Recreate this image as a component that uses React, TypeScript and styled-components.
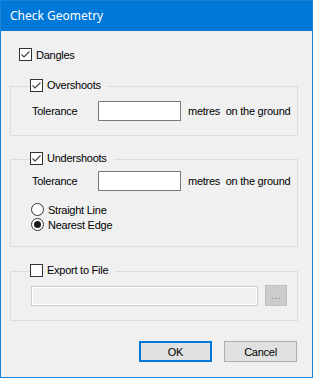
import styled, { createGlobalStyle } from "styled-components";

const GlobalStyle = createGlobalStyle`
  html, body {
    margin: 0;
    padding: 0;
    background: #f0f0f0;
  }
  * { box-sizing: border-box; }
`;

const Window = styled.div`
  width: 313px;
  height: 378px;
  border: 1px solid #1883d7;
  background: #f0f0f0;
  display: flex;
  flex-direction: column;
  font-family: "Liberation Sans", Arial, sans-serif;
  font-size: 11px;
  letter-spacing: -0.25px;
  color: #000;
`;

const TitleBar = styled.div`
  height: 30px;
  flex: none;
  background: #0078d7;
  color: #fff;
  display: flex;
  align-items: center;
  padding-left: 9px;
  padding-bottom: 1px;
  font-family: "Noto Sans", "Open Sans", sans-serif;
  font-size: 12px;
  letter-spacing: 0;
`;

const Body = styled.div`
  flex: 1;
  display: flex;
  flex-direction: column;
  padding: 0 14px 0 9px;
`;

const CheckRow = styled.label<{ $top?: number }>`
  display: flex;
  align-items: center;
  gap: 4px;
  height: 13px;
  margin-top: ${(p) => p.$top ?? 0}px;
  padding-left: 9px;
  white-space: nowrap;
`;

const Box = styled.span`
  width: 13px;
  height: 13px;
  flex: none;
  border: 1px solid #333;
  background: #fff;
  display: flex;
  align-items: center;
  justify-content: center;
`;

const Group = styled.fieldset<{ $top: number }>`
  margin: ${(p) => p.$top}px 0 0 0;
  padding: 0 0 14px 20px;
  border: 1px solid #dcdcdc;
  min-width: 0;
`;

const Legend = styled.legend`
  margin-left: 7px;
  padding: 0 7px 0 1px;
  height: 15px;
  line-height: 13px;
`;

const LegendInner = styled.span`
  display: flex;
  align-items: center;
  gap: 4px;
  height: 13px;
  margin-left: -9px;
`;

const FieldRow = styled.div<{ $top: number }>`
  display: flex;
  align-items: center;
  margin-top: ${(p) => p.$top}px;
`;

const FieldLabel = styled.span`
  width: 67px;
  padding-left: 1px;
`;

const TextInput = styled.div`
  width: 83px;
  height: 20px;
  border: 1px solid #7a7a7a;
  background: #fff;
`;

const Units = styled.span`
  margin-left: 7px;
  white-space: pre;
`;

const RadioRow = styled.label<{ $top?: number }>`
  display: flex;
  align-items: center;
  gap: 4px;
  height: 15px;
  margin-top: ${(p) => p.$top ?? 0}px;
`;

const RadioCircle = styled.span<{ $on?: boolean }>`
  width: 13px;
  height: 13px;
  border: 1px solid #333;
  border-radius: 50%;
  background: #fff;
  display: flex;
  align-items: center;
  justify-content: center;
  &::after {
    content: "";
    width: 7px;
    height: 7px;
    border-radius: 50%;
    background: ${(p) => (p.$on ? "#1a1a1a" : "transparent")};
  }
`;

const PathField = styled.div`
  width: 227px;
  height: 20px;
  border: 1px solid #cccccc;
  background: #f0f0f0;
  box-shadow: inset 1px 1px 0 #fff, inset -1px -1px 0 #fff;
`;

const BrowseButton = styled.div`
  width: 22px;
  height: 21px;
  margin-left: 7px;
  border: 1px solid #bfbfbf;
  background: #cccccc;
  color: #838383;
  display: flex;
  align-items: center;
  justify-content: center;
  padding-bottom: 1px;
  font-size: 10px;
  letter-spacing: 0.5px;
`;

const ButtonRow = styled.div`
  display: flex;
  justify-content: flex-end;
  gap: 12px;
  margin-top: 20px;
  margin-right: 1px;
`;

const DialogButton = styled.button<{ $default?: boolean }>`
  width: 73px;
  height: 21px;
  padding: 0;
  background: #e1e1e1;
  border: ${(p) => (p.$default ? "2px solid #0078d7" : "1px solid #adadad")};
  font-family: inherit;
  font-size: 11px;
  letter-spacing: inherit;
  color: #000;
`;

const Check = ({ on }: { on: boolean }) => (
  <Box>
    {on && (
      <svg width="11" height="11" viewBox="0 0 11 11">
        <polyline points="1.5,5.5 4,8 9.5,2.5" fill="none" stroke="#444" strokeWidth="1.2" />
      </svg>
    )}
  </Box>
);

const Tolerance = ({ top }: { top: number }) => (
  <FieldRow $top={top}>
    <FieldLabel>Tolerance</FieldLabel>
    <TextInput />
    <Units>metres  on the ground</Units>
  </FieldRow>
);

export default function App() {
  return (
    <>
      <GlobalStyle />
      <Window>
        <TitleBar>Check Geometry</TitleBar>
        <Body>
          <CheckRow $top={17}>
            <Check on />
            Dangles
          </CheckRow>

          <Group $top={18}>
            <Legend>
              <LegendInner>
                <Check on />
                Overshoots
              </LegendInner>
            </Legend>
            <Tolerance top={7} />
          </Group>

          <Group $top={16}>
            <Legend>
              <LegendInner>
                <Check on />
                Undershoots
              </LegendInner>
            </Legend>
            <Tolerance top={4} />
            <RadioRow $top={11}>
              <RadioCircle />
              Straight Line
            </RadioRow>
            <RadioRow>
              <RadioCircle $on />
              Nearest Edge
            </RadioRow>
          </Group>

          <Group $top={17}>
            <Legend>
              <LegendInner>
                <Check on={false} />
                Export to File
              </LegendInner>
            </Legend>
            <FieldRow $top={6}>
              <PathField />
              <BrowseButton>...</BrowseButton>
            </FieldRow>
          </Group>

          <ButtonRow>
            <DialogButton $default>OK</DialogButton>
            <DialogButton>Cancel</DialogButton>
          </ButtonRow>
        </Body>
      </Window>
    </>
  );
}
